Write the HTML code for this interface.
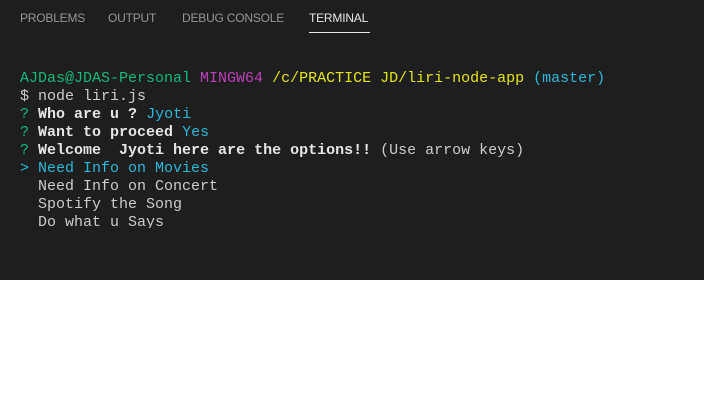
<!DOCTYPE html>
<html><head><style>
body{margin:0;width:704px;height:409px;background:#fff;overflow:hidden}
.p{position:absolute;left:0;top:0;width:704px;height:280px;background:#1e1e1e}
.tab{position:absolute;top:11px;font:12px "Liberation Sans",sans-serif;color:#969696;letter-spacing:-0.2px}
.ul{position:absolute;left:309px;top:32px;width:61px;height:1px;background:#e7e7e7}
.t{position:absolute;left:20px;top:70px;width:690px;height:158px;overflow:hidden;font:15px/18px "Liberation Mono",monospace;color:#cccccc;white-space:pre}
.g{color:#23d18b}.m{color:#bc3fbc}.y{color:#e5e510}.c{color:#29b8db}.b{font-weight:bold;color:#e5e5e5}.gg{color:#0dbc79}
</style></head><body>
<div class="p">
<div class="tab" style="left:20px">PROBLEMS</div>
<div class="tab" style="left:108px">OUTPUT</div>
<div class="tab" style="left:182px">DEBUG CONSOLE</div>
<div class="tab" style="left:309px;color:#e7e7e7">TERMINAL</div>
<div class="ul"></div>
<div class="t"><span class="gg">AJDas@JDAS-Personal</span> <span class="m">MINGW64</span> <span class="y">/c/PRACTICE JD/liri-node-app</span> <span class="c">(master)</span>
$ node liri.js
<span class="gg">?</span> <span class="b">Who are u ?</span> <span class="c">Jyoti</span>
<span class="gg">?</span> <span class="b">Want to proceed</span> <span class="c">Yes</span>
<span class="gg">?</span> <span class="b">Welcome  Jyoti here are the options!!</span> (Use arrow keys)
<span class="c">&gt; Need Info on Movies</span>
  Need Info on Concert
  Spotify the Song
  Do what u Says</div>
</div>
</body></html>
